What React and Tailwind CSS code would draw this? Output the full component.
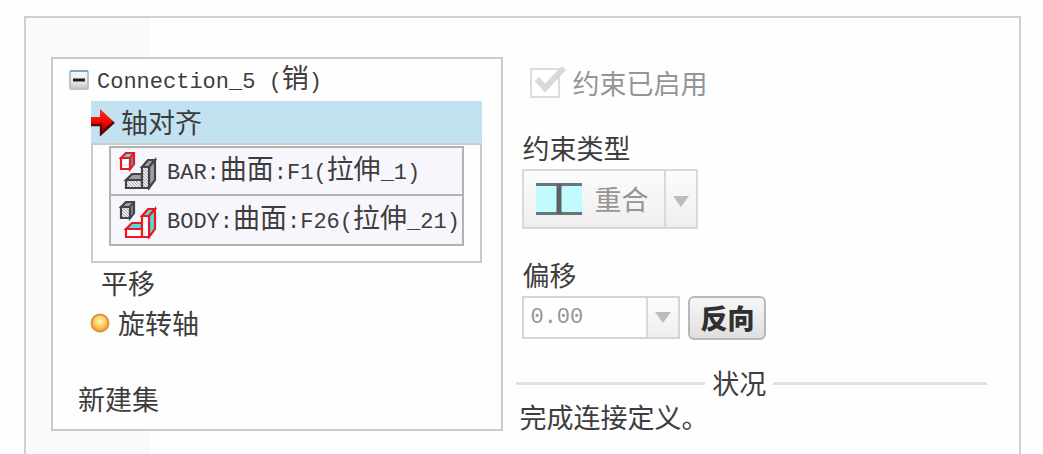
import React, { useState } from "react";

// Latin characters take half the width of a CJK one
const Latin = ({ children }) => (
  <span className="font-['Liberation_Mono',monospace] text-[22px]">{children}</span>
);

const CollapseIcon = () => (
  <svg width="20" height="20" viewBox="0 0 20 20">
    <defs>
      <linearGradient id="collapse" x1="0" y1="0" x2="0" y2="1">
        <stop offset="0" stopColor="#f6f8fb" />
        <stop offset="0.6" stopColor="#e9e8e4" />
        <stop offset="1" stopColor="#c4c2b8" />
      </linearGradient>
    </defs>
    <rect x="1" y="1" width="18" height="18" rx="1.5" fill="url(#collapse)" stroke="#b3c3cf" strokeWidth="2" />
    <path d="M1 1h18" stroke="#86a5bc" strokeWidth="2" />
    <path d="M4 10h12" stroke="#2b1a10" strokeWidth="3" />
  </svg>
);

const ArrowIcon = () => (
  <svg width="24" height="28" viewBox="0 0 24 28">
    <defs>
      <linearGradient id="arrow" x1="0" y1="0" x2="0" y2="1">
        <stop offset="0" stopColor="#ff2a1c" />
        <stop offset="0.55" stopColor="#f40404" />
        <stop offset="1" stopColor="#7c0303" />
      </linearGradient>
    </defs>
    <path d="M0 9h9V1l14 13L9 26v-8H0z" fill="url(#arrow)" />
    <path d="M0 17h10v9L23 14" fill="none" stroke="#5a0606" strokeWidth="2.4" />
  </svg>
);

const DotIcon = () => (
  <svg width="20" height="20" viewBox="0 0 20 20">
    <defs>
      <radialGradient id="dot" cx="0.5" cy="0.4" r="0.55">
        <stop offset="0" stopColor="#fff6c4" />
        <stop offset="0.5" stopColor="#ffd667" />
        <stop offset="1" stopColor="#f9a52c" />
      </radialGradient>
    </defs>
    <circle cx="10" cy="10" r="8.5" fill="url(#dot)" stroke="#dd9448" strokeWidth="2" />
  </svg>
);

// The picked part is outlined in red, the other one in dark grey
const Box = ({ active, small }) => {
  const stroke = active ? "#ee1620" : "#43434a";
  const front = active ? "#ffffff" : "url(#hatch)";
  const side = active ? "#4fdcdc" : "#a29da6";
  if (small) {
    return (
      <g stroke={stroke} strokeWidth="2.2">
        <path d="M2 6l5-5h8v11l-4 5V6z" fill={side} />
        <path d="M11 6l4-5" />
        <path d="M2 6h9v11H2z" fill={front} />
        <path d="M13 5v9" stroke="#77777d" strokeWidth="1.5" />
      </g>
    );
  }
  return (
    <g stroke={stroke} strokeWidth="2.2">
      <path d="M7 28l6-6h10v6z" fill={side} />
      <path d="M23 15l6-7h7l-6 7z" fill={side} />
      <path d="M30 15l6-7v20l-6 8z" fill={side} />
      <path d="M7 28h16v8H7z" fill={front} />
      <path d="M23 15h7v21h-7z" fill={front} />
    </g>
  );
};

const PartIcon = ({ active }) => (
  <svg width="38" height="38" viewBox="0 0 38 38" className="shrink-0">
    <defs>
      <pattern id="hatch" width="3" height="3" patternUnits="userSpaceOnUse">
        <path d="M0 0h3v3H0z" fill="#eeeeef" />
        <path d="M0 0l3 3" stroke="#a9a9ad" strokeWidth="1" />
      </pattern>
    </defs>
    <Box small active={active === "small"} />
    <Box active={active === "large"} />
  </svg>
);

const CoincidentIcon = () => (
  <svg width="46" height="32" viewBox="0 0 46 32" className="shrink-0">
    <path d="M0 0h46v32H0z" fill="#c2fbfd" />
    <path d="M0 1.5h46M0 30.5h46" stroke="#66777a" strokeWidth="3" />
    <path d="M23 1v30" stroke="#606063" strokeWidth="5" />
  </svg>
);

const Caret = () => (
  <svg width="16" height="11" viewBox="0 0 16 11">
    <path d="M0 0h16l-8 11z" fill="#bcbcbc" />
  </svg>
);

const App = () => {
  const [offset, setOffset] = useState("0.00");

  return (
    <div className="min-h-screen bg-[#fefefe] pt-4 pl-6 pr-[22px] flex font-['Noto_Sans_CJK_SC',sans-serif] text-[27px] leading-8 text-[#3d3d3d]">
      <div className="flex-grow border-2 border-b-0 border-[#d0d0d0] bg-[linear-gradient(to_right,#fafafa_124px,#fefefe_124px)] pt-[39px] pl-[25px] pr-8 pb-5 grid grid-cols-[25fr_26fr] gap-x-[13px] items-start">

        {/* CONSTRAINT TREE */}
        <div className="min-w-0 border-2 border-[#cbcbcb] bg-[#fefefe] pb-2.5">
          <div className="h-[42px] pl-4 flex items-center gap-2">
            <button type="button" aria-label="Collapse"><CollapseIcon /></button>
            <span className="whitespace-pre"><Latin>Connection_5 (</Latin>销<Latin>)</Latin></span>
          </div>

          <div className="ml-[38px] mr-[19px]">
            <button type="button" className="w-full h-[42px] bg-[#c2e2f1] flex items-center gap-1.5 text-left">
              <ArrowIcon />
              轴对齐
            </button>
            <div className="border-2 border-[#cbcbcb] px-4 pt-px pb-[15px]">
              <ul className="border-2 border-[#b3b3b3] divide-y-2 divide-[#b3b3b3] bg-[#f8f6fd]">
                <li className="h-[48px] pl-2 flex items-center gap-2.5 whitespace-nowrap">
                  <PartIcon active="small" />
                  <span><Latin>BAR:</Latin>曲面<Latin>:F1(</Latin>拉伸<Latin>_1)</Latin></span>
                </li>
                <li className="h-[48px] pl-2 flex items-center gap-2.5 whitespace-nowrap">
                  <PartIcon active="large" />
                  <span><Latin>BODY:</Latin>曲面<Latin>:F26(</Latin>拉伸<Latin>_21)</Latin></span>
                </li>
              </ul>
            </div>
          </div>

          <button type="button" className="h-10 pl-12 flex items-center">平移</button>
          <button type="button" className="h-10 pl-[37px] flex items-center gap-2">
            <DotIcon />
            旋转轴
          </button>
          <button type="button" className="h-10 mt-9 pl-[25px] flex items-center">新建集</button>
        </div>

        {/* CONSTRAINT SETTINGS */}
        <div className="min-w-0">
          <label className="h-[52px] pl-3.5 flex items-center gap-3 text-[#959595]">
            <span className="relative flex">
              <input type="checkbox" defaultChecked disabled className="appearance-none size-[30px] border-2 border-[#dcdcdc] bg-white" />
              <svg width="36" height="32" viewBox="0 0 36 32" className="absolute left-0 bottom-0 pointer-events-none">
                <path d="M7 13l8 9L34 2" fill="none" stroke="#d9d9d9" strokeWidth="6" />
              </svg>
            </span>
            约束已启用
          </label>

          <div className="mt-[23px] pl-1.5 flex flex-col items-start">
            <label htmlFor="type">约束类型</label>
            <div className="mt-[5px] h-[60px] w-44 flex items-stretch border-2 border-[#d9d9d9] bg-gradient-to-b from-[#fcfcfc] to-[#eeeeee]">
              <div className="flex-grow pl-3 flex items-center gap-3">
                <CoincidentIcon />
                <select id="type" disabled className="appearance-none bg-transparent text-[#959595] opacity-100">
                  <option>重合</option>
                </select>
              </div>
              <span className="w-8 border-l-2 border-[#d9d9d9] flex items-center justify-center pt-1"><Caret /></span>
            </div>
          </div>

          <div className="mt-[30px] pl-1.5 flex flex-col items-start">
            <label htmlFor="offset">偏移</label>
            <div className="mt-[5px] flex items-stretch gap-2">
              <div className="h-[43px] w-[158px] flex border-2 border-[#d5d5d5] bg-[#fefefe]">
                <input
                  id="offset"
                  type="text"
                  value={offset}
                  disabled
                  onChange={(e) => setOffset(e.target.value)}
                  className="min-w-0 flex-grow pl-1.5 font-['Liberation_Mono',monospace] text-[22px] text-[#959595]"
                />
                <button type="button" disabled aria-label="Recent values" className="w-8 shrink-0 border-l-2 border-[#d9d9d9] bg-gradient-to-b from-[#fcfcfc] to-[#eeeeee] flex items-center justify-center">
                  <Caret />
                </button>
              </div>
              <button type="button" className="h-[44px] px-2.5 border-2 border-[#b9b9b9] rounded-md bg-gradient-to-b from-[#f7f7f7] to-[#dfdfdf] font-black text-[#303030] flex items-center">
                反向
              </button>
            </div>
          </div>

          <div className="mt-[27px] flex items-center gap-[7px]">
            <span className="flex-[188] h-[3px] bg-[#e0e0e0]"></span>
            <h2>状况</h2>
            <span className="flex-[213] h-[3px] bg-[#e0e0e0]"></span>
          </div>
          <p className="mt-0.5 pl-[3px]">完成连接定义。</p>
        </div>
      </div>
    </div>
  );
};

export default App;
